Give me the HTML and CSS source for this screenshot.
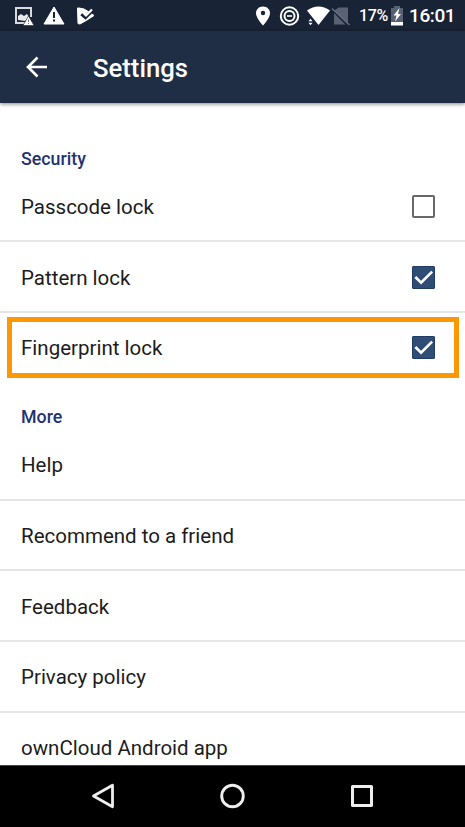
FILE: index.html
```html
<!DOCTYPE html>
<html lang="en">
<head>
<meta charset="utf-8">
<title>Settings</title>
<link rel="stylesheet" href="styles.css">
</head>
<body>
<div class="screen">
  <div class="status">
    <svg class="notices" width="100" height="31" viewBox="0 0 100 31">
      <path d="M25 23H16V8h15v9" fill="none" stroke="#d8dade" stroke-width="2"/>
      <path d="M18 20v-4l3-2 3 2 3-2 2 3-4 4z" fill="#e8e9eb"/>
      <path d="M28.500 16 34 25.500H23z" fill="#fff" stroke="#182335" stroke-width=".6"/>
      <path d="M28.500 19.500v2.500m0 1v1" stroke="#7b828d"/>
      <path d="M54 7 64 24H44z" fill="#fff" stroke="#fff" stroke-linejoin="round"/>
      <path d="M54 12v6m0 1.500v2" stroke="#182335" stroke-width="2"/>
      <path d="M79 8 84 9 89 12 94 15.500 87 20 80 24 78 23.500 77.500 8z" fill="#fff" stroke="#fff" stroke-linejoin="round"/>
      <path d="M81.500 13.800l4 3.500 8-8" fill="none" stroke="#182335" stroke-width="3.600"/>
      <path d="M82 11.500l4 4 6-6" fill="none" stroke="#fff" stroke-width="2.200"/>
    </svg>
    <svg class="signals" width="100" height="31" viewBox="0 0 100 31">
      <path d="M13 6.500c-4 0-7 2.900-7 6.700 0 4.800 7 12.300 7 12.300s7-7.500 7-12.300c0-3.800-3-6.700-7-6.700z" fill="#fff"/>
      <circle cx="13" cy="13" r="2.200" fill="#182335"/>
      <circle cx="39.500" cy="16" r="8.700" fill="none" stroke="#fff" stroke-width="2"/>
      <circle cx="39.500" cy="16" r="5" fill="none" stroke="#fff" stroke-width="2"/>
      <path d="M37 16h5" stroke="#fff" stroke-width="1.600"/>
      <path d="M57 10.500q11.500-8 23 0L68.500 25z" fill="#fff"/>
      <path d="M58.500 21.300l2-2.500 2 2.500zm0 1.500h4l-2 2.500z" fill="#fff"/>
      <path d="M88.500 7.500H98V23.500L84.500 10.500zM84 13 95.500 24.500H84z" fill="#596270"/>
      <path d="M82 8.500 99.500 25" stroke="#697280" stroke-width="1.300"/>
    </svg>
    <span class="percent">17%</span>
    <svg class="battery" width="14" height="31" viewBox="0 0 14 31">
      <path d="M1 8h3V6h6v2h3v14H1z" fill="#566272"/>
      <path d="M1 22h12v3.500H1z" fill="#fff"/>
      <path d="M9.500 8 3.500 15.500h3L5 21.500 11 14H8z" fill="#fff"/>
    </svg>
    <span class="clock">16:01</span>
  </div>

  <header class="appbar">
    <svg class="back" width="22" height="22" viewBox="0 0 22 22"><path d="M21 11H2M11.500 1.500 2 11l9.500 9.500" fill="none" stroke="#fff" stroke-width="2.600"/></svg>
    <h1>Settings</h1>
  </header>

  <main class="content">
    <h2>Security</h2>
    <div class="row"><span>Passcode lock</span><i class="box"></i></div>
    <div class="row"><span>Pattern lock</span><i class="box checked"><svg width="23" height="23" viewBox="0 0 24 24"><path d="M3.500 11.500 9.500 17.500 21 5.800" fill="none" stroke="#fff" stroke-width="2.700"/></svg></i></div>
    <div class="row highlighted"><span>Fingerprint lock</span><i class="box checked"><svg width="23" height="23" viewBox="0 0 24 24"><path d="M3.500 11.500 9.500 17.500 21 5.800" fill="none" stroke="#fff" stroke-width="2.700"/></svg></i></div>
    <h2>More</h2>
    <div class="row"><span>Help</span></div>
    <div class="row"><span>Recommend to a friend</span></div>
    <div class="row"><span>Feedback</span></div>
    <div class="row"><span>Privacy policy</span></div>
    <div class="row"><span>ownCloud Android app</span></div>
  </main>

  <nav class="navbar">
    <svg width="24" height="28" viewBox="0 0 24 28"><path d="M21.500 3.200V24.800L2.500 14z" fill="none" stroke="#eee" stroke-width="2.800" stroke-linejoin="round"/></svg>
    <svg width="28" height="28" viewBox="0 0 28 28"><circle cx="13.500" cy="14" r="10.800" fill="none" stroke="#eee" stroke-width="2.900"/></svg>
    <svg width="24" height="28" viewBox="0 0 24 28"><rect x="2.500" y="4.500" width="19" height="19" fill="none" stroke="#eee" stroke-width="3" stroke-linejoin="round"/></svg>
  </nav>
</div>
</body>
</html>
```

FILE: styles.css
```css
* { box-sizing: border-box; }

body {
  margin: 0;
  background: #fff;
  font-family: Roboto, sans-serif;
}

.screen {
  display: flex;
  flex-direction: column;
  width: 465px;
  height: 827px;
  overflow: hidden;
}

svg { display: block; flex: none; }

.status {
  display: flex;
  flex: none;
  align-items: center;
  height: 31px;
  padding-right: 9px;
  background: #182335;
  color: #fff;
  font-weight: 500;
  white-space: nowrap;
}

.signals { margin-left: 150px; }

.percent {
  width: 30px;
  margin-left: 9px;
  padding-top: 1px;
  font-size: 16px;
  line-height: 30px;
  letter-spacing: -0.4px;
}

.battery { margin-left: 1px; }

.clock {
  margin-left: 5px;
  padding-top: 1px;
  font-size: 19px;
  line-height: 30px;
  letter-spacing: -0.4px;
}

.appbar {
  display: flex;
  flex: none;
  align-items: center;
  height: 72px;
  padding-left: 26px;
  background: #1f2e45;
  color: #fff;
  box-shadow: 0 1px 4px rgba(0, 0, 0, 0.5);
  z-index: 1;
}

.appbar h1 {
  margin: 2px 0 0 45px;
  font-size: 25.7px;
  font-weight: 500;
  line-height: 32px;
}

.content {
  flex: 1;
  min-height: 0;
  padding-top: 21.5px;
  overflow: hidden;
}

h2 {
  height: 47px;
  margin: 0;
  padding: 23px 21px 0;
  color: #1f3373;
  font-size: 17.8px;
  font-weight: 500;
  line-height: 22px;
}

.row {
  display: flex;
  align-items: center;
  justify-content: space-between;
  height: 70.7px;
  padding: 2px 30px 0 21px;
  border-bottom: 2px solid #e5e5e5;
  color: #1c1c1c;
  font-size: 20.5px;
  white-space: nowrap;
}

.highlighted {
  height: 61px;
  margin: 4px 6px 5px 7px;
  padding: 1px 19px 0 9px;
  border: 5px solid #ff9800;
}

.box {
  width: 23px;
  height: 23px;
  border: 2px solid #686868;
  border-radius: 2px;
}

.box.checked {
  border: 0;
  background: #304d76;
  box-shadow: inset 0 0 0 1px #213b68;
}

.navbar {
  display: flex;
  flex: none;
  align-items: center;
  justify-content: space-between;
  height: 62px;
  padding: 0 91px 1px;
  border-top: 1px solid #444;
  background: #000;
}
```
